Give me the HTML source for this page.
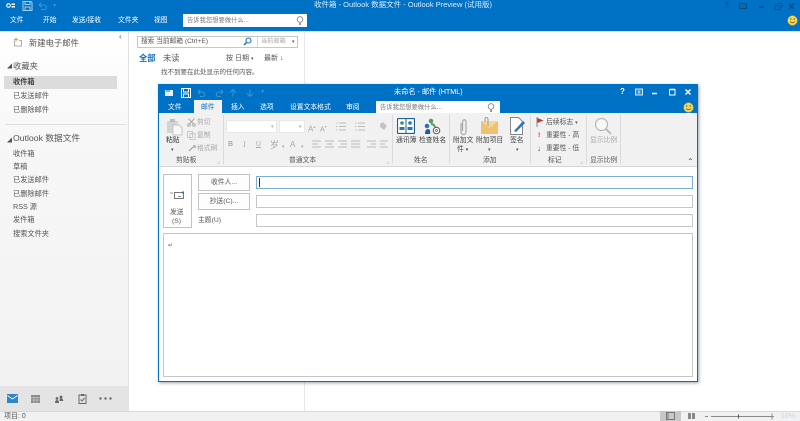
<!DOCTYPE html>
<html lang="zh"><head><meta charset="utf-8"><title>收件箱 - Outlook Preview</title>
<style>
html,body{margin:0;padding:0;width:800px;height:421px;overflow:hidden;background:#fff}
body{font-family:"Liberation Sans","Noto Sans CJK SC",sans-serif;font-size:6.8px;color:#444}
#r{position:absolute;left:0;top:0;width:800px;height:421px;overflow:hidden;filter:blur(.3px)}
#r div,#r span,#r svg{position:absolute}
.t{white-space:nowrap;line-height:10px}
.w{color:#fff}.g{color:#a8a8a8}.d{color:#555}
.l{font-size:7.2px}
.sep{width:1px;background:#dcdcdc}
.f{background:#fff;border:1px solid #c6c6c6;box-sizing:border-box}
.b{background:#fdfdfd;border:1px solid #c2c2c2;box-sizing:border-box;text-align:center;color:#555;line-height:16px}
</style></head><body><div id="r">
<!-- main title bar -->
<div style="left:0;top:0;width:800px;height:31px;background:#0072c6"></div>
<div style="left:0;top:31px;width:800px;height:1px;background:#cfe2f1"></div>
<svg style="left:6px;top:2px" width="10" height="7" viewBox="0 0 10 7"><circle cx="2.500" cy="3.500" r="1.800" fill="none" stroke="#fff" stroke-width="1.100"/><path d="M5.500 1.500h3.500v1.500H5.500zM5.500 4h3.500v1.500H5.500z" fill="#fff"/></svg>
<svg style="left:22px;top:1px" width="11" height="10" viewBox="0 0 11 10"><path d="M1 .5h8l1 1v8H1zM3 .5v3h5v-3M3 9V6h5v3" fill="none" stroke="#a9cdea"/></svg>
<svg style="left:38px;top:2px" width="9" height="8" viewBox="0 0 9 8"><path d="M1 3h5a2.200 2.200 0 0 1 0 4.500H3M1 3l2.500-2.500M1 3l2.500 2.500" fill="none" stroke="#3e93d4"/></svg>
<span class="t" style="left:53px;top:1px;color:#3e93d4;font-size:6px">▾</span>
<span class="t" style="left:314px;top:0;color:#dcebf6;font-size:7.5px">收件箱 - Outlook 数据文件 - Outlook Preview (试用版)</span>
<span class="t w" style="left:10px;top:16px">文件</span>
<span class="t w" style="left:43px;top:16px">开始</span>
<span class="t w" style="left:72px;top:16px">发送/接收</span>
<span class="t w" style="left:118px;top:16px">文件夹</span>
<span class="t w" style="left:154px;top:16px">视图</span>
<div style="left:183px;top:14px;width:124px;height:13px;background:#fff"></div>
<span class="t" style="left:187px;top:16px;color:#777;font-size:6.300px">告诉我您想要做什么...</span>
<svg style="left:296px;top:16px" width="8" height="10" viewBox="0 0 8 10"><circle cx="4" cy="3.500" r="2.800" fill="none" stroke="#777" stroke-width=".8"/><path d="M3 7h2v2H3z" fill="#999"/></svg>
<span class="t" style="left:724px;top:1px;color:#004f8b;font-weight:bold;font-size:8px">?</span>
<svg style="left:738px;top:3px" width="60" height="8" viewBox="0 0 60 8"><rect x="1.500" y=".5" width="7" height="5" fill="#1a66a5" stroke="#004f8b"/><path d="M21 4h5" stroke="#004f8b" stroke-width="1.500"/><path d="M37 2.500h5v4h-5zM39 .5h5v4" fill="none" stroke="#004f8b"/><path d="M51 .5l5 5.500M56 .5l-5 5.500" stroke="#004f8b" stroke-width="1.400"/></svg>
<svg style="left:787px;top:15px" width="11" height="11" viewBox="0 0 11 11"><circle cx="5.500" cy="5.500" r="4.800" fill="#f2d75b" stroke="#c9a93a" stroke-width=".5"/><circle cx="3.800" cy="4" r=".7" fill="#6b5a10"/><circle cx="7.200" cy="4" r=".7" fill="#6b5a10"/><path d="M3 6.500q2.500 2.500 5 0" fill="none" stroke="#6b5a10" stroke-width=".7"/></svg>

<!-- left pane -->
<div style="left:0;top:32px;width:128px;height:354px;background:linear-gradient(#fff,#f7f7f7 30%,#f2f2f2)"></div>
<div style="left:128px;top:32px;width:1px;height:379px;background:#e1e1e1"></div>
<svg style="left:13px;top:37px" width="10" height="10" viewBox="0 0 10 10"><path d="M1.500 3.500v5.500h7V3.500H6" fill="none" stroke="#999" stroke-width=".8"/><path d="M3 .5v4M1 2.500h4" stroke="#e0a040"/></svg>
<span class="t d" style="left:29px;top:38px;font-size:8.300px">新建电子邮件</span>
<span class="t" style="left:119px;top:32px;font-size:8px;color:#555">‹</span>
<span class="t d" style="left:7px;top:62px;font-size:5px">◢</span>
<span class="t d" style="left:13px;top:61px;font-size:8.300px">收藏夹</span>
<div style="left:4px;top:76px;width:113px;height:13px;background:#dcdcdc"></div>
<span class="t l" style="left:13px;top:77px;font-weight:bold;color:#444">收件箱</span>
<span class="t d l" style="left:13px;top:91px">已发送邮件</span>
<span class="t d l" style="left:13px;top:105px">已删除邮件</span>
<div style="left:5px;top:124px;width:121px;height:1px;background:#dedede"></div>
<span class="t d" style="left:7px;top:136px;font-size:5px">◢</span>
<span class="t d" style="left:13px;top:133px;font-size:8.700px">Outlook 数据文件</span>
<span class="t d l" style="left:13px;top:149px">收件箱</span>
<span class="t d l" style="left:13px;top:162px">草稿</span>
<span class="t d l" style="left:13px;top:175px">已发送邮件</span>
<span class="t d l" style="left:13px;top:189px">已删除邮件</span>
<span class="t d l" style="left:13px;top:202px">RSS 源</span>
<span class="t d l" style="left:13px;top:215px">发件箱</span>
<span class="t d l" style="left:13px;top:229px">搜索文件夹</span>
<!-- nav bar -->
<div style="left:0;top:386px;width:128px;height:25px;background:#e4e4e4"></div>
<svg style="left:7px;top:394px" width="11" height="9" viewBox="0 0 11 9"><rect width="11" height="9" fill="#2e86cf"/><path d="M.5 1.500l5 3.500 5-3.500" fill="none" stroke="#fff" stroke-width=".8"/></svg>
<svg style="left:31px;top:395px" width="9" height="8" viewBox="0 0 9 8"><rect width="9" height="8" fill="#8c8c8c"/><path d="M0 2.500h9M0 5h9M3 2v6M6 2v6" stroke="#d8d8d8" stroke-width=".5"/></svg>
<svg style="left:54px;top:395px" width="10" height="8" viewBox="0 0 10 8"><circle cx="3" cy="3.500" r="1.400" fill="#666"/><circle cx="7" cy="2" r="1.400" fill="#666"/><path d="M1 8q0-3 2-3t2 3zM5.500 6q0-3 1.500-3t2.500 3z" fill="#666"/></svg>
<svg style="left:78px;top:393px" width="9" height="11" viewBox="0 0 9 11"><path d="M1 2h7v8.500H1z" fill="none" stroke="#666"/><path d="M3 1h3v2H3z" fill="#666"/><path d="M2.500 6.500l1.500 1.500 2.500-3" fill="none" stroke="#666"/></svg>
<svg style="left:99px;top:397px" width="13" height="3" viewBox="0 0 13 3"><circle cx="1.500" cy="1.500" r="1.200" fill="#666"/><circle cx="6.500" cy="1.500" r="1.200" fill="#666"/><circle cx="11.500" cy="1.500" r="1.200" fill="#666"/></svg>

<!-- status bar -->
<div style="left:0;top:411px;width:800px;height:10px;background:#f1f1f1;border-top:1px solid #d9d9d9;box-sizing:border-box"></div>
<span class="t d" style="left:4px;top:412px;font-size:7px">项目: 0</span>
<div style="left:660px;top:411px;width:21px;height:10px;background:#c8c8c8"></div>
<svg style="left:666px;top:412px" width="60" height="9" viewBox="0 0 60 9"><rect x=".5" y=".5" width="8" height="7" fill="none" stroke="#777"/><path d="M2 .5v7" stroke="#777"/><path d="M22 1h3v6h-3zM26 1h3v6h-3z" fill="#888"/></svg>
<svg style="left:704px;top:412px" width="70" height="9" viewBox="0 0 70 9"><path d="M1 4.500h3M68 1.500v6M65 4.500h6M7 4.500h58" stroke="#888"/><path d="M34.500 2.500v4" stroke="#555"/></svg>
<span class="t" style="left:781px;top:412px;color:#bcd6ec;font-size:7px">10%</span>

<!-- mail list -->
<div style="left:304px;top:32px;width:1px;height:379px;background:#e8e8e8"></div>
<div class="f" style="left:137px;top:36px;width:161px;height:12px"></div>
<div style="left:257px;top:37px;width:1px;height:10px;background:#d8d8d8"></div>
<span class="t d" style="left:141px;top:37px;font-size:6.700px">搜索 当前邮箱 (Ctrl+E)</span>
<svg style="left:243px;top:37px" width="9" height="9" viewBox="0 0 9 9"><circle cx="5.500" cy="3.500" r="2.500" fill="none" stroke="#1a6fb5" stroke-width="1.100"/><path d="M3.500 5.500L1 8" stroke="#1a6fb5" stroke-width="1.500"/></svg>
<span class="t g" style="left:261px;top:37px;font-size:6.200px">当前邮箱</span>
<span class="t d" style="left:292px;top:37px;font-size:5px">▾</span>
<span class="t" style="left:139px;top:53px;color:#0f6fc0;font-weight:bold;font-size:8.300px">全部</span>
<span class="t d" style="left:163px;top:53px;font-size:8.300px">未读</span>
<span class="t d" style="left:226px;top:54px;font-size:7px">按 日期</span>
<span class="t d" style="left:251px;top:54px;font-size:5px">▾</span>
<span class="t d" style="left:264px;top:54px;font-size:7px">最新 ↓</span>
<span class="t d" style="left:161px;top:68px;font-size:6.500px">找不到要在此处显示的任何内容。</span>

<!-- compose window -->
<div style="left:158px;top:84px;width:540px;height:298px;background:#fff;border:1px solid #0072c6;box-sizing:border-box;box-shadow:1px 1px 3px rgba(60,90,120,.55)"></div>
<div style="left:159px;top:85px;width:538px;height:28px;background:#0072c6"></div>
<svg style="left:165px;top:89px" width="9" height="8" viewBox="0 0 9 8"><rect y="1" width="8" height="6" fill="#e6f0f8"/><path d="M1 2h4" stroke="#0072c6"/></svg>
<svg style="left:181px;top:88px" width="10" height="10" viewBox="0 0 10 10"><path d="M.5.5h9v9h-9z" fill="none" stroke="#fff"/><path d="M2.500 1v3h5V1M2.500 9.500V6h5v3.500" fill="none" stroke="#fff"/></svg>
<svg style="left:197px;top:89px" width="27" height="8" viewBox="0 0 27 8"><path d="M1 3h4.500a2.200 2.200 0 0 1 0 4.500H3M1 3l2.200-2.200M1 3l2.200 2.200M26 3h-4.500a2.200 2.200 0 0 0 0 4.500H24M26 3l-2.200-2.200M26 3l-2.200 2.200" fill="none" stroke="#3e93d4"/></svg>
<svg style="left:229px;top:89px" width="30" height="8" viewBox="0 0 30 8"><path d="M4 7.500v-7M1 3.500L4 .5l3 3M21 .5v7M18 4.500l3 3 3-3" fill="none" stroke="#3e93d4"/></svg>
<span class="t" style="left:261px;top:87px;color:#3e93d4;font-size:6px">▾</span>
<span class="t w" style="left:394px;top:87px;font-size:7.200px">未命名 - 邮件 (HTML)</span>
<span class="t w" style="left:620px;top:87px;font-weight:bold;font-size:8px">?</span>
<svg style="left:634px;top:88px" width="60" height="9" viewBox="0 0 60 9"><rect x="1.500" y="1" width="7" height="6" fill="#3a8fd0" stroke="#cfe4f5"/><path d="M5 2.500v3" stroke="#fff"/><path d="M18 5.500h5" stroke="#fff" stroke-width="1.500"/><path d="M35.500 1.500h5.500v5.500h-5.500z" fill="none" stroke="#fff"/><path d="M35.500 1.500h5.500" stroke="#fff" stroke-width="1.500"/><path d="M51.500 1.500l5 5M56.500 1.500l-5 5" stroke="#fff" stroke-width="1.500"/></svg>
<span class="t w" style="left:168px;top:103px">文件</span>
<div style="left:194px;top:100px;width:28px;height:13px;background:#f1f1f1"></div>
<span class="t" style="left:201px;top:103px;color:#0f6fc0">邮件</span>
<span class="t w" style="left:231px;top:103px">插入</span>
<span class="t w" style="left:260px;top:103px">选项</span>
<span class="t w" style="left:290px;top:103px">设置文本格式</span>
<span class="t w" style="left:346px;top:103px">审阅</span>
<div style="left:376px;top:101px;width:124px;height:12px;background:#fff"></div>
<span class="t" style="left:380px;top:103px;color:#777;font-size:6.300px">告诉我您想要做什么...</span>
<svg style="left:487px;top:103px" width="8" height="10" viewBox="0 0 8 10"><circle cx="4" cy="3.500" r="2.800" fill="none" stroke="#777" stroke-width=".8"/><path d="M3 7h2v2H3z" fill="#999"/></svg>
<svg style="left:683px;top:102px" width="11" height="11" viewBox="0 0 11 11"><circle cx="5.500" cy="5.500" r="4.800" fill="#f2d75b" stroke="#c9a93a" stroke-width=".5"/><circle cx="3.800" cy="4" r=".7" fill="#6b5a10"/><circle cx="7.200" cy="4" r=".7" fill="#6b5a10"/><path d="M3 6.500q2.500 2.500 5 0" fill="none" stroke="#6b5a10" stroke-width=".7"/></svg>

<!-- ribbon -->
<div style="left:159px;top:113px;width:538px;height:54px;background:#f1f1f1;border-bottom:1px solid #d6d6d6;box-sizing:border-box"></div>
<div class="sep" style="left:223px;top:115px;height:49px"></div>
<div class="sep" style="left:392px;top:115px;height:49px"></div>
<div class="sep" style="left:449px;top:115px;height:49px"></div>
<div class="sep" style="left:530px;top:115px;height:49px"></div>
<div class="sep" style="left:586px;top:115px;height:49px"></div>
<div class="sep" style="left:620px;top:115px;height:49px"></div>
<svg style="left:166px;top:118px" width="17" height="18" viewBox="0 0 17 18"><path d="M1 3h11v12H1z" fill="#d4d4d4"/><path d="M4 1h5v3H4z" fill="#bbb"/><path d="M7 7h6l3 3v7H7z" fill="#f8f8f8" stroke="#c4c4c4"/></svg>
<span class="t" style="left:166px;top:136px;color:#333">粘贴</span>
<span class="t d" style="left:171px;top:145px;font-size:5px">▾</span>
<svg style="left:187px;top:118px" width="9" height="9" viewBox="0 0 9 9"><path d="M1.500.5l5 5.500M7.500.5l-5 5.500" stroke="#aaa"/><circle cx="2" cy="7" r="1.300" fill="none" stroke="#aaa"/><circle cx="7" cy="7" r="1.300" fill="none" stroke="#aaa"/></svg>
<span class="t g" style="left:197px;top:118px">剪切</span>
<svg style="left:187px;top:131px" width="9" height="9" viewBox="0 0 9 9"><path d="M.5.5h5v6h-5zM3 2.500h5v6H3z" fill="#f2f2f2" stroke="#c8c8c8"/></svg>
<span class="t g" style="left:197px;top:131px">复制</span>
<svg style="left:188px;top:144px" width="9" height="8" viewBox="0 0 9 8"><path d="M1 7l4-4" stroke="#aaa" stroke-width="1.300"/><path d="M5 1h3v3H5z" fill="#bbb"/></svg>
<span class="t g" style="left:197px;top:144px">格式刷</span>
<span class="t d" style="left:176px;top:156px">剪贴板</span>
<span class="t g" style="left:217px;top:157px;font-size:6px">⌟</span>
<div style="left:226px;top:120px;width:51px;height:13px;background:#fff;border:1px solid #e8e8e8;box-sizing:border-box"></div>
<div style="left:279px;top:120px;width:26px;height:13px;background:#fff;border:1px solid #e8e8e8;box-sizing:border-box"></div>
<span class="t g" style="left:271px;top:122px;font-size:5px">▾</span>
<span class="t g" style="left:299px;top:122px;font-size:5px">▾</span>
<span class="t g" style="left:308px;top:122px;font-size:8px">A<sup style="font-size:4px;position:static">▴</sup></span>
<span class="t g" style="left:320px;top:122px;font-size:7px">A<sup style="font-size:4px;position:static">▾</sup></span>
<svg style="left:336px;top:121px" width="52" height="11" viewBox="0 0 52 11"><path d="M3 2h7M3 5.500h7M3 9h7M0 2h1.500M0 5.500h1.500M0 9h1.500M22 2h7M22 5.500h7M22 9h7M19 2h1.500M19 5.500h1.500M19 9h1.500" stroke="#bbb"/><path d="M44 3l3-2 4 4-3 4-4-3z" fill="#c4c4c4"/></svg>
<span class="t g" style="left:228px;top:140px;font-weight:bold;font-size:7px">B</span>
<span class="t g" style="left:243px;top:140px;font-style:italic;font-family:'Liberation Serif',serif;font-size:8px">I</span>
<span class="t g" style="left:256px;top:140px;text-decoration:underline;font-size:7px">U</span>
<span class="t g" style="left:270px;top:140px;font-size:9px">岁</span>
<span class="t g" style="left:290px;top:140px;font-size:8px">A</span>
<span class="t g" style="left:282px;top:142px;font-size:5px">▾</span>
<span class="t g" style="left:301px;top:142px;font-size:5px">▾</span>
<svg style="left:312px;top:140px" width="76" height="10" viewBox="0 0 76 10"><path d="M0 1h9M0 4h6M0 7h9M13 1h9M14.500 4h6M13 7h9M26 1h9M29 4h6M26 7h9M39 1h9M39 4h9M39 7h9" stroke="#bbb"/><path d="M55 1h9M59 4h5M55 7h9M68 1h8M68 4h5M68 7h8" stroke="#bbb"/></svg>
<span class="t d" style="left:289px;top:156px">普通文本</span>
<span class="t g" style="left:386px;top:157px;font-size:6px">⌟</span>
<svg style="left:397px;top:118px" width="18" height="16" viewBox="0 0 18 16"><rect x=".5" y=".5" width="17" height="15" rx="1" fill="#fff" stroke="#1f5f99" stroke-width="1.200"/><path d="M9 1v14" stroke="#1f5f99"/><circle cx="5" cy="5" r="1.800" fill="#4a8a5a"/><circle cx="13" cy="5" r="1.800" fill="#2c74b3"/><path d="M2.500 12V9h5v3zM10.500 12V9h5v3z" fill="#2c74b3"/></svg>
<span class="t" style="left:396px;top:136px">通讯簿</span>
<svg style="left:423px;top:118px" width="18" height="17" viewBox="0 0 18 17"><circle cx="8" cy="3" r="2.300" fill="#5a9a6a"/><circle cx="4" cy="8" r="2.300" fill="#2c74b3"/><path d="M2 16q0-5 3-5t2 5z" fill="#1f5f99"/><path d="M8 6q3 0 4 3" stroke="#5a9a6a" stroke-width="2" fill="none"/><circle cx="13.500" cy="12.500" r="3.300" fill="#fff" stroke="#555"/><circle cx="13.500" cy="12.500" r="1" fill="none" stroke="#555" stroke-width=".7"/></svg>
<span class="t" style="left:419px;top:136px">检查姓名</span>
<span class="t d" style="left:414px;top:156px">姓名</span>
<svg style="left:459px;top:118px" width="9" height="18" viewBox="0 0 9 18"><path d="M2 5v9a2.500 2.500 0 0 0 5 0V3.500a1.700 1.700 0 0 0-3.400 0V13" fill="none" stroke="#999"/></svg>
<span class="t" style="left:453px;top:136px">附加文</span>
<span class="t" style="left:457px;top:145px">件 <span style="position:static;font-size:5px">▾</span></span>
<svg style="left:481px;top:117px" width="17" height="17" viewBox="0 0 17 17"><rect y="4" width="17" height="13" fill="#eec26f"/><path d="M0 4l8.500 7 8.500-7" fill="#f5d79b"/><path d="M4 5V2a1.500 1.500 0 0 1 3 0v7" fill="none" stroke="#999"/></svg>
<span class="t" style="left:476px;top:136px">附加项目</span>
<span class="t d" style="left:488px;top:145px;font-size:5px">▾</span>
<svg style="left:510px;top:117px" width="16" height="18" viewBox="0 0 16 18"><path d="M.5.5h8l4 4v13H.5z" fill="#fff" stroke="#888"/><path d="M4 14l9-10 2 2-9 9z" fill="#2c74b3"/></svg>
<span class="t" style="left:510px;top:136px">签名</span>
<span class="t d" style="left:516px;top:145px;font-size:5px">▾</span>
<span class="t d" style="left:483px;top:156px">添加</span>
<svg style="left:536px;top:117px" width="8" height="10" viewBox="0 0 8 10"><path d="M1 0v10" stroke="#888"/><path d="M1.500 1l6 2.500-6 2.500z" fill="#c0392b"/></svg>
<span class="t d" style="left:546px;top:118px">后续标志 <span style="position:static;font-size:5px">▾</span></span>
<span class="t" style="left:538px;top:131px;color:#d0322a;font-weight:bold">!</span>
<span class="t d" style="left:546px;top:131px">重要性 - 高</span>
<span class="t" style="left:537px;top:144px;color:#1f6fb5;font-weight:bold;font-size:8px">↓</span>
<span class="t d" style="left:546px;top:144px">重要性 - 低</span>
<span class="t d" style="left:548px;top:156px">标记</span>
<span class="t g" style="left:580px;top:157px;font-size:6px">⌟</span>
<svg style="left:594px;top:117px" width="18" height="18" viewBox="0 0 18 18"><circle cx="7.500" cy="7.500" r="6" fill="#f8f8f8" stroke="#b5b5b5" stroke-width="1.200"/><path d="M12 12l5 5" stroke="#b5b5b5" stroke-width="1.800"/></svg>
<span class="t g" style="left:590px;top:136px">显示比例</span>
<span class="t d" style="left:590px;top:156px">显示比例</span>
<span class="t d" style="left:687px;top:157px;font-size:8px">⌃</span>

<!-- compose form -->
<div class="b" style="left:163px;top:174px;width:29px;height:54px;background:#fff"></div>
<svg style="left:169px;top:191px" width="17" height="9" viewBox="0 0 17 9"><path d="M5.500 1.500h9v6h-9z" fill="#fff" stroke="#777"/><path d="M1 2h3" stroke="#999"/><path d="M9 5.500h3" stroke="#888"/><path d="M13 .5h2v2h-2z" fill="#2c74b3"/></svg>
<span class="t d" style="left:170px;top:208px">发送</span>
<span class="t d" style="left:172px;top:217px">(S)</span>
<div class="b" style="left:198px;top:174px;width:52px;height:17px">收件人...</div>
<div class="b" style="left:198px;top:193px;width:52px;height:17px">抄送(C)...</div>
<span class="t d" style="left:198px;top:216px">主题(U)</span>
<div style="left:256px;top:176px;width:437px;height:13px;border:1px solid #7aaed6;background:#fff;box-sizing:border-box"></div>
<div style="left:259px;top:178px;width:1px;height:9px;background:#333"></div>
<div class="f" style="left:256px;top:195px;width:437px;height:13px"></div>
<div class="f" style="left:256px;top:214px;width:437px;height:13px"></div>
<div class="f" style="left:163px;top:233px;width:530px;height:144px"></div>
<span class="t d" style="left:168px;top:241px;font-size:6px">↵</span>
</div></body></html>
